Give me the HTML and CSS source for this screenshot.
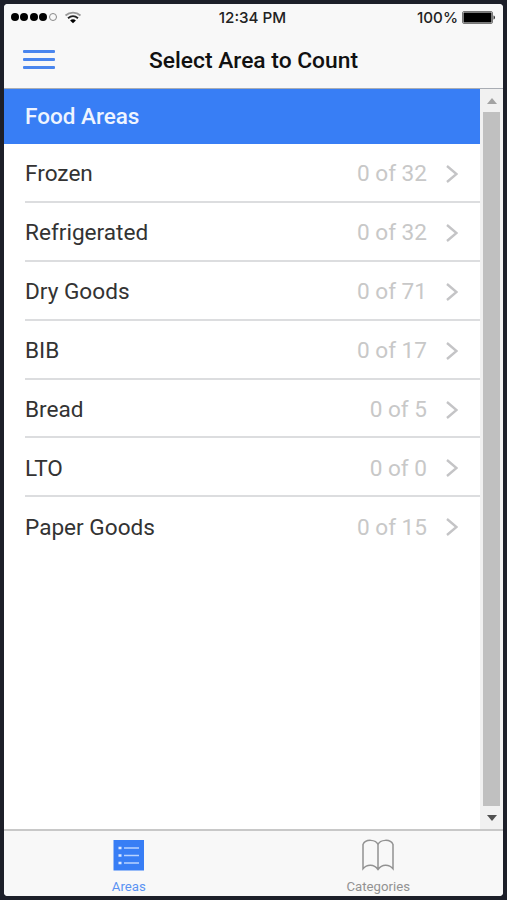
FILE: index.html
```html
<!DOCTYPE html>
<html lang="en">

<head>
    <meta charset="UTF-8">
    <meta name="viewport" content="width=device-width, initial-scale=1.0">
    <title>Select Area to Count</title>
    <link rel="stylesheet" href="styles.css">
</head>

<body>
    <div class="screen">
        <header class="header">
            <div class="statusbar">
                <div class="signal">
                    <i></i><i></i><i></i><i></i><i class="empty"></i>
                    <svg class="wifi" width="18" height="13" viewBox="0 0 18 13" fill="none">
                        <path d="M1.5 4.5C5.8.7 12.2.7 16.5 4.5" stroke="#999" stroke-width="1.7" />
                        <path d="M4 7.2c3-2.5 7-2.5 10 0" stroke="#222" stroke-width="1.9" />
                        <path d="M6.1 9.4c1.8-1.5 4-1.5 5.8 0L9 12.3z" fill="#000" />
                    </svg>
                </div>
                <span class="time">12:34 PM</span>
                <div class="power">
                    <span>100%</span>
                    <svg width="34" height="13" viewBox="0 0 34 13">
                        <rect x=".5" y=".5" width="30" height="12" rx="1.5" fill="#f8f8f8" stroke="#777" />
                        <rect x="1.5" y="1.5" width="28" height="10" rx=".5" fill="#000" />
                        <path d="M31.5 4.5c2 .5 2 3.500 0 4z" fill="#333" />
                    </svg>
                </div>
            </div>
            <div class="navbar">
                <button class="menu" aria-label="Menu"><i></i><i></i><i></i></button>
                <h1>Select Area to Count</h1>
            </div>
        </header>

        <main class="content">
            <div class="list">
                <h2>Food Areas</h2>
                <ul>
                    <li><span>Frozen</span><span class="count">0 of 32</span><svg class="chevron" viewBox="0 0 12 18"><path d="M1 1l9.500 8L1 17" /></svg></li>
                    <li><span>Refrigerated</span><span class="count">0 of 32</span><svg class="chevron" viewBox="0 0 12 18"><path d="M1 1l9.500 8L1 17" /></svg></li>
                    <li><span>Dry Goods</span><span class="count">0 of 71</span><svg class="chevron" viewBox="0 0 12 18"><path d="M1 1l9.500 8L1 17" /></svg></li>
                    <li><span>BIB</span><span class="count">0 of 17</span><svg class="chevron" viewBox="0 0 12 18"><path d="M1 1l9.500 8L1 17" /></svg></li>
                    <li><span>Bread</span><span class="count">0 of 5</span><svg class="chevron" viewBox="0 0 12 18"><path d="M1 1l9.500 8L1 17" /></svg></li>
                    <li><span>LTO</span><span class="count">0 of 0</span><svg class="chevron" viewBox="0 0 12 18"><path d="M1 1l9.500 8L1 17" /></svg></li>
                    <li><span>Paper Goods</span><span class="count">0 of 15</span><svg class="chevron" viewBox="0 0 12 18"><path d="M1 1l9.500 8L1 17" /></svg></li>
                </ul>
            </div>
            <div class="scrollbar">
                <svg width="10" height="6" viewBox="0 0 10 6"><path d="M0 6l5-6 5 6z" fill="#a3a3a3" /></svg>
                <div class="thumb"></div>
                <svg width="10" height="6" viewBox="0 0 10 6"><path d="M0 0l5 6 5-6z" fill="#505050" /></svg>
            </div>
        </main>

        <nav class="tabs">
            <a class="tab active">
                <svg width="32" height="32" viewBox="0 0 32 32">
                    <path d="M.5 1h30.500v30.500H.5z" fill="#387ef5" />
                    <path d="M11 9h15M11 16.500h15M11 24h15" stroke="#b9d3ff" stroke-width="1.7" />
                    <path d="M5.500 9h3M5.500 16.500h3M5.500 24h3" stroke="#dce9ff" stroke-width="2.500" />
                </svg>
                <span>Areas</span>
            </a>
            <a class="tab">
                <svg width="32" height="32" viewBox="0 0 32 32" fill="none" stroke="#929292" stroke-width="1.500">
                    <path d="M16 5.500C14 .5 3.500-.5 1 5.500v24.300c4-4.800 11-4.800 15 .7 4-5.500 11-5.500 15-.7V5.500C28.500-.5 18 .5 16 5.500zv25" />
                </svg>
                <span>Categories</span>
            </a>
        </nav>
    </div>
</body>

</html>
```
FILE: styles.css
```css
* {
    box-sizing: border-box;
}

body {
    margin: 0;
    height: 100vh;
    padding: 4px;
    background: #1d1f29;
    font-family: Roboto, sans-serif;
}

.screen {
    height: 100%;
    display: flex;
    flex-direction: column;
    background: #fff;
    border-radius: 4px;
    overflow: hidden;
}

.header {
    height: 85px;
    flex-shrink: 0;
    background: #f8f8f8;
    border-bottom: 1px solid #a9adb4;
}

.statusbar {
    height: 26px;
    padding: 0 7px;
    display: grid;
    grid-template-columns: 1fr auto 1fr;
    align-items: center;
    font: 500 15.2px Inter, sans-serif;
    color: #222;

    .signal {
        display: flex;
        align-items: center;
        gap: 1.4px;
    }

    .signal i {
        width: 8px;
        height: 8px;
        border-radius: 50%;
        background: #000;
    }

    .signal .empty {
        background: none;
        border: 1px solid #888;
    }

    .wifi {
        margin-left: 6px;
    }

    .time {
        margin-right: 2px;
    }

    .power {
        display: flex;
        align-items: center;
        justify-content: flex-end;
        gap: 4px;
    }
}

.navbar {
    height: 58px;
    padding: 0 19px;
    display: grid;
    grid-template-columns: 32px 1fr 32px;
    align-items: center;

    h1 {
        margin: 0;
        padding-top: 3px;
        text-align: center;
        font-size: 22.8px;
        font-weight: 500;
        color: #111;
    }
}

.menu {
    padding: 0;
    border: none;
    background: none;
    display: flex;
    flex-direction: column;
    gap: 5px;

    i {
        height: 3px;
        background: #4a86ee;
        border-radius: 1px;
    }
}

.content {
    flex: 1;
    display: flex;
    min-height: 0;
}

.list {
    flex: 1;

    h2 {
        margin: 0;
        height: 55px;
        padding-left: 21px;
        line-height: 55px;
        font-size: 22.5px;
        font-weight: 500;
        color: #eef4ff;
        background: #387ef5;
    }

    ul {
        margin: 0;
        padding: 0 0 0 21px;
        list-style: none;
    }

    li {
        height: 58.9px;
        padding: 3px 22px 0 0;
        display: flex;
        align-items: center;
        font-size: 22.6px;
        color: #333;
        border-bottom: 2px solid #dcdddf;
    }

    li:last-child {
        border-bottom-color: transparent;
    }

    .count {
        margin-left: auto;
        color: #c8c8c8;
    }

    .chevron {
        width: 12px;
        height: 18px;
        margin-left: 19px;
        fill: none;
        stroke: #c4c4c6;
        stroke-width: 2.4;
    }
}

.scrollbar {
    width: 23px;
    padding: 9px 3px 8px;
    display: flex;
    flex-direction: column;
    align-items: center;
    background: #f1f1f1;

    .thumb {
        flex: 1;
        width: 17px;
        margin: 8px 0 9px;
        background: #c0c0c0;
    }
}

.tabs {
    height: 67px;
    flex-shrink: 0;
    display: flex;
    background: #f8f8f8;
    border-top: 2px solid #c8c8c8;
}

.tab {
    flex: 1;
    display: flex;
    flex-direction: column;
    align-items: center;
    padding-top: 8px;
    font-size: 13.2px;
    line-height: 15px;
    color: #929292;

    span {
        margin-top: 8px;
    }

    &.active {
        color: #5b93f3;
    }
}
```
